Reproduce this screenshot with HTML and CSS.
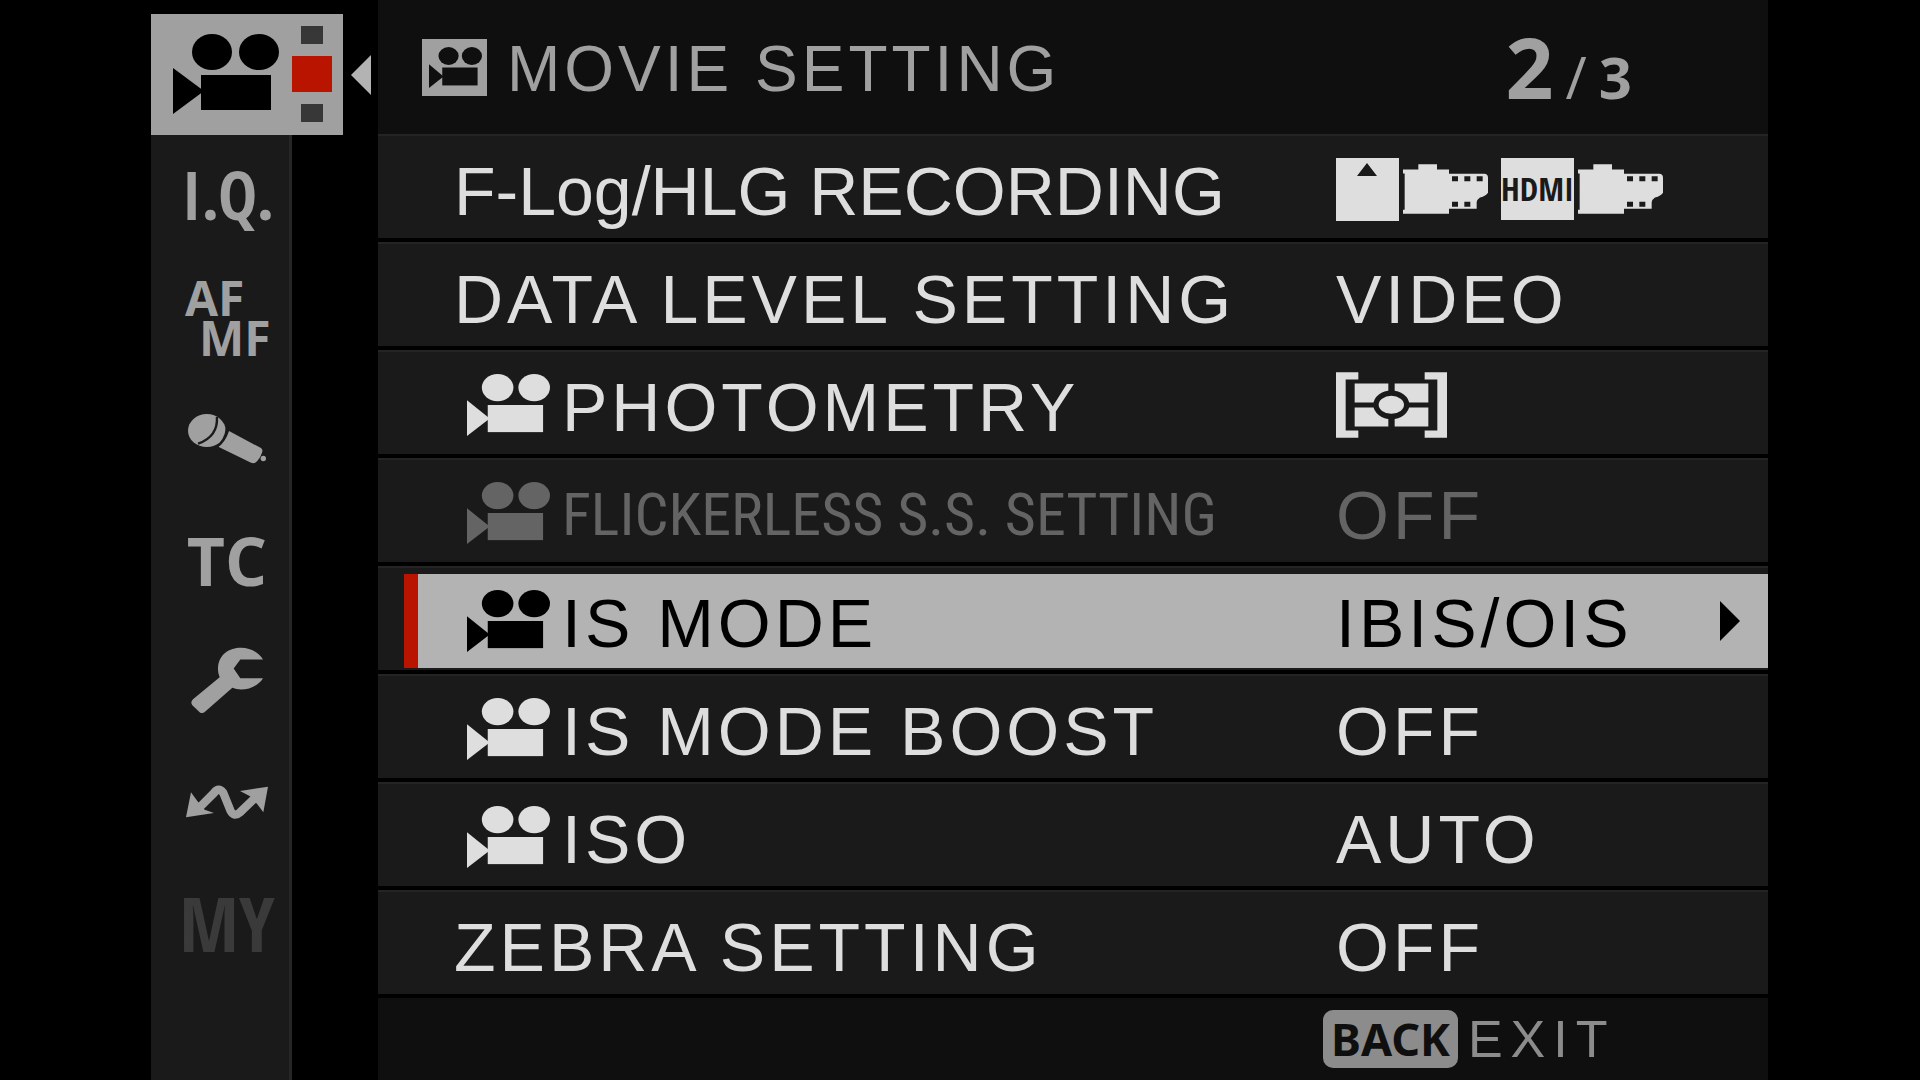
FILE: index.html
```
<!DOCTYPE html>
<html lang="en">
<head>
    <meta charset="UTF-8">
    <title>Movie Setting</title>
    <link rel="stylesheet" href="styles.css">
</head>
<body>
    <!-- shared icons -->
    <svg class="defs" aria-hidden="true">
        <symbol id="camera" viewBox="0 0 84 64" preserveAspectRatio="none">
            <ellipse cx="31" cy="14" rx="16" ry="14"/>
            <ellipse cx="68" cy="14" rx="16" ry="14"/>
            <rect x="21" y="32" width="56" height="28"/>
            <path d="M0 27L23 46L0 64Z"/>
        </symbol>
        <symbol id="film" viewBox="0 0 255 149">
            <path fill-rule="evenodd" d="M0 16H46V0H102V16H138V29H243Q255 29 255 41V86Q249 96 231 100Q222 106 221 114V134H138V149H0V137H5V28H0ZM147 36V51H165V36ZM184 36V51H202V36ZM221 36V51H239V36ZM147 113V128H165V113ZM184 113V128H202V113Z"/>
        </symbol>
    </svg>

    <div class="screen">
        <nav class="sidebar" aria-label="Menu tabs">
            <div class="current">
                <button type="button" class="current-tab" aria-label="Movie setting">
                    <svg class="movie" viewBox="0 0 106 80">
                        <ellipse cx="39" cy="18" rx="20" ry="18"/>
                        <ellipse cx="86" cy="18" rx="20" ry="18"/>
                        <rect x="28" y="41" width="70" height="35"/>
                        <path d="M0 34L31 57L0 80Z"/>
                    </svg>
                    <span class="pages">
                        <span class="dot"></span>
                        <span class="dot active"></span>
                        <span class="dot"></span>
                    </span>
                </button>
                <svg class="pointer" viewBox="0 0 20 40"><path d="M20 0V40L0 20Z"/></svg>
            </div>
            <ul class="tabs">
                <li><button type="button" class="iq">I.Q.</button></li>
                <li>
                    <button type="button" class="afmf"><span>AF</span><span class="mf">MF</span></button>
                </li>
                <li>
                    <button type="button" aria-label="Audio setting">
                        <svg width="78" height="50" viewBox="0 0 232 148">
                            <ellipse cx="56" cy="49" rx="56" ry="49"/>
                            <path d="M122 50L217 101Q224 106 220 115Q214 134 200 145Q194 148 186 144L90 97Q112 82 122 50Z"/>
                            <circle cx="224" cy="132" r="8"/>
                            <path class="cut" d="M86 8Q90 66 30 88"/>
                            <path class="cut" d="M116 44Q110 82 84 98"/>
                        </svg>
                    </button>
                </li>
                <li><button type="button" class="tc">TC</button></li>
                <li>
                    <button type="button" aria-label="Set up">
                        <svg width="72" height="67" viewBox="0 0 216 200">
                            <path d="M4 174Q-3 165 6 156L86 90Q80 78 81 62C83 22 115 2 150 2C178 2 204 16 216 37H148L128 64L148 93H216C204 113 178 127 150 127Q136 127 124 122L42 194Q34 201 26 195Z"/>
                        </svg>
                    </button>
                </li>
                <li>
                    <button type="button" aria-label="Network setting">
                        <svg width="82" height="34" viewBox="0 0 246 102">
                            <path class="wave" d="M34 74L84 24Q98 4 112 24L134 78Q144 98 162 82L210 36"/>
                            <path d="M0 97L15 22L34 48L56 74L84 84Z"/>
                            <path d="M246 5L232 82L214 58L192 34L162 18Z"/>
                        </svg>
                    </button>
                </li>
                <li><button type="button" class="my" disabled>MY</button></li>
            </ul>
        </nav>

        <main class="panel">
            <header class="header">
                <svg class="title-icon" viewBox="0 0 65 57">
                    <rect width="65" height="57"/>
                    <use href="#camera" x="7" y="8" width="53" height="41"/>
                </svg>
                <h1>MOVIE SETTING</h1>
                <p class="count"><strong>2</strong><span class="slash">/</span><b>3</b></p>
            </header>

            <ul class="menu">
                <li>
                    <button type="button">
                        <span class="label dense">F-Log/HLG RECORDING</span>
                        <span class="value icons">
                            <svg width="63" height="63" viewBox="0 0 63 63">
                                <path fill-rule="evenodd" d="M0 0H63V63H0ZM31 5L21 18H41Z"/>
                            </svg>
                            <svg class="film" width="85" height="50"><use href="#film"/></svg>
                            <span class="hdmi">HDMI</span>
                            <svg width="85" height="50"><use href="#film"/></svg>
                        </span>
                    </button>
                </li>
                <li>
                    <button type="button">
                        <span class="label">DATA LEVEL SETTING</span>
                        <span class="value">VIDEO</span>
                    </button>
                </li>
                <li>
                    <button type="button">
                        <span class="label"><svg class="camera"><use href="#camera"/></svg>PHOTOMETRY</span>
                        <span class="value icons">
                            <svg width="111" height="66" viewBox="0 0 333 197" aria-label="Multi">
                                <path d="M0 0H67V22H29V175H67V197H0ZM333 0H266V22H304V175H266V197H333Z"/>
                                <path d="M56 34H157V91H56ZM176 34H277V91H176ZM56 106H157V163H56ZM176 106H277V163H176Z"/>
                                <ellipse class="ring" cx="166" cy="98" rx="46" ry="35"/>
                            </svg>
                        </span>
                    </button>
                </li>
                <li>
                    <button type="button" disabled>
                        <span class="label narrow"><svg class="camera"><use href="#camera"/></svg>FLICKERLESS S.S. SETTING</span>
                        <span class="value">OFF</span>
                    </button>
                </li>
                <li class="selected">
                    <button type="button">
                        <span class="label"><svg class="camera"><use href="#camera"/></svg>IS MODE</span>
                        <span class="value">IBIS/OIS</span>
                        <svg class="more" viewBox="0 0 20 40"><path d="M0 0V40L20 20Z"/></svg>
                    </button>
                </li>
                <li>
                    <button type="button">
                        <span class="label"><svg class="camera"><use href="#camera"/></svg>IS MODE BOOST</span>
                        <span class="value">OFF</span>
                    </button>
                </li>
                <li>
                    <button type="button">
                        <span class="label"><svg class="camera"><use href="#camera"/></svg>ISO</span>
                        <span class="value">AUTO</span>
                    </button>
                </li>
                <li>
                    <button type="button">
                        <span class="label">ZEBRA SETTING</span>
                        <span class="value">OFF</span>
                    </button>
                </li>
            </ul>

            <footer class="footer">
                <button type="button"><kbd>BACK</kbd>EXIT</button>
            </footer>
        </main>
    </div>
</body>
</html>
```
FILE: styles.css
```
* {
    box-sizing: border-box;
}
body {
    margin: 0;
    background-color: #000;
    color: #dedede;
    font-family: "Liberation Sans", Arial, sans-serif;
}
ul {
    list-style: none;
    margin: 0;
    padding: 0;
}
button {
    margin: 0;
    padding: 0;
    border: none;
    background: none;
    color: inherit;
    font: inherit;
    letter-spacing: inherit;
    text-align: left;
    cursor: pointer;
}
svg {
    display: block;
    flex-shrink: 0;
    fill: currentColor;
}
.defs {
    position: absolute;
    width: 0;
    height: 0;
}
.screen {
    display: flex;
    min-height: 100vh;
    padding: 0 152px 0 151px;
}

/* left tabs */
.sidebar {
    display: flex;
    flex-direction: column;
    flex-shrink: 0;
    width: 227px;
    padding-top: 14px;
    color: #a0a0a0;
}
.current {
    display: flex;
    align-items: center;
    gap: 8px;
}
.current-tab {
    display: flex;
    align-items: center;
    gap: 13px;
    width: 192px;
    height: 121px;
    padding: 0 0 2px 22px;
    background-color: #a0a0a0;
    color: #000;
}
.movie {
    width: 106px;
    height: 80px;
}
.pages {
    display: flex;
    flex-direction: column;
    align-items: center;
    gap: 12px;
}
.dot {
    width: 22px;
    height: 18px;
    background-color: #373737;
}
.dot.active {
    width: 40px;
    height: 36px;
    background-color: #b81400;
}
.pointer {
    width: 20px;
    height: 40px;
    color: #b3b3b3;
}
.tabs {
    flex: 1;
    width: 141px;
    background-color: #1a1a1a;
    border-right: 3px solid #262626;
}
.tabs button {
    display: flex;
    align-items: center;
    justify-content: center;
    width: 100%;
    height: 121px;
    padding: 2px 0 0 14px;
    line-height: 1;
    font-family: "Open Sans", "Noto Sans", sans-serif;
    font-weight: bold;
}
.tabs .iq {
    padding: 0 0 4px 16px;
    font-family: "Open Sans Condensed", "Open Sans", sans-serif;
    font-size: 66px;
}
.tabs .afmf {
    flex-direction: column;
    align-items: flex-start;
    padding-left: 34px;
    font-size: 48px;
    line-height: 40px;
}
.mf {
    padding-left: 14px;
}
.tabs .tc {
    font-size: 66px;
}
.tabs .my {
    font-family: "Open Sans Condensed", "Open Sans", sans-serif;
    font-size: 76px;
    color: #3a3a3a;
}
.cut {
    fill: none;
    stroke: #1a1a1a;
    stroke-width: 7;
}
.wave {
    fill: none;
    stroke: currentColor;
    stroke-width: 25;
}

/* menu panel */
.panel {
    display: flex;
    flex-direction: column;
    flex: 1;
    background-color: #0f0f0f;
    letter-spacing: 4px;
}
.header {
    display: flex;
    align-items: center;
    height: 134px;
    padding: 0 136px 0 44px;
    color: #a0a0a0;
}
.title-icon {
    width: 65px;
    height: 57px;
}
.title-icon use {
    fill: #0f0f0f;
}
h1 {
    flex: 1;
    margin: 0;
    padding: 4px 0 0 20px;
    font-size: 64px;
    font-weight: normal;
}
.count {
    display: flex;
    align-items: baseline;
    gap: 12px;
    margin: 0;
    font-family: "Open Sans", "Noto Sans", sans-serif;
    font-size: 58px;
    letter-spacing: normal;
    line-height: 1;
}
.count strong {
    font-size: 84px;
}
.menu li {
    display: flex;
    height: 108px;
    border-top: 2px solid #242424;
    border-bottom: 4px solid #000;
    background-color: #1a1a1a;
}
.menu button {
    display: grid;
    grid-template-columns: 1fr 432px;
    align-items: center;
    flex: 1;
    padding: 4px 0 0 76px;
    font-size: 68px;
    line-height: 80px;
}
.menu button:disabled {
    color: #646464;
}
.label,
.value {
    padding-top: 4px;
}
.label {
    display: flex;
    align-items: center;
    white-space: nowrap;
}
.label.dense {
    letter-spacing: normal;
}
.label.narrow {
    font-family: "Roboto Condensed", "Liberation Sans", sans-serif;
    font-size: 60px;
    letter-spacing: normal;
}
.camera {
    width: 83px;
    height: 62px;
    margin: 0 12px 4px 13px;
}
.icons {
    display: flex;
    align-items: center;
    gap: 4px;
    padding-top: 0;
}
.film {
    margin-right: 9px;
}
.hdmi {
    width: 73px;
    background-color: #dedede;
    color: #1a1a1a;
    font-family: "Open Sans Condensed", "Open Sans", sans-serif;
    font-size: 33px;
    font-weight: bold;
    letter-spacing: normal;
    line-height: 62px;
    text-align: center;
}
.ring {
    stroke: #1a1a1a;
    stroke-width: 16;
}
.menu .selected button {
    grid-template-columns: 1fr 384px 48px;
    margin: 6px 0 2px 26px;
    padding: 0 0 0 36px;
    border-left: 14px solid #b81400;
    background-color: #b3b3b3;
    color: #000;
}
.more {
    width: 20px;
    height: 40px;
}
.footer {
    display: flex;
    flex: 1;
    align-items: center;
    justify-content: flex-end;
    color: #8c8c8c;
}
.footer button {
    display: flex;
    align-items: center;
    gap: 10px;
    width: 445px;
    font-size: 52px;
    letter-spacing: 8px;
}
kbd {
    padding: 0 8px;
    border-radius: 10px;
    background-color: #8c8c8c;
    color: #0f0f0f;
    font-family: "Noto Sans", sans-serif;
    font-size: 45px;
    font-weight: bold;
    letter-spacing: normal;
    line-height: 58px;
}
```
